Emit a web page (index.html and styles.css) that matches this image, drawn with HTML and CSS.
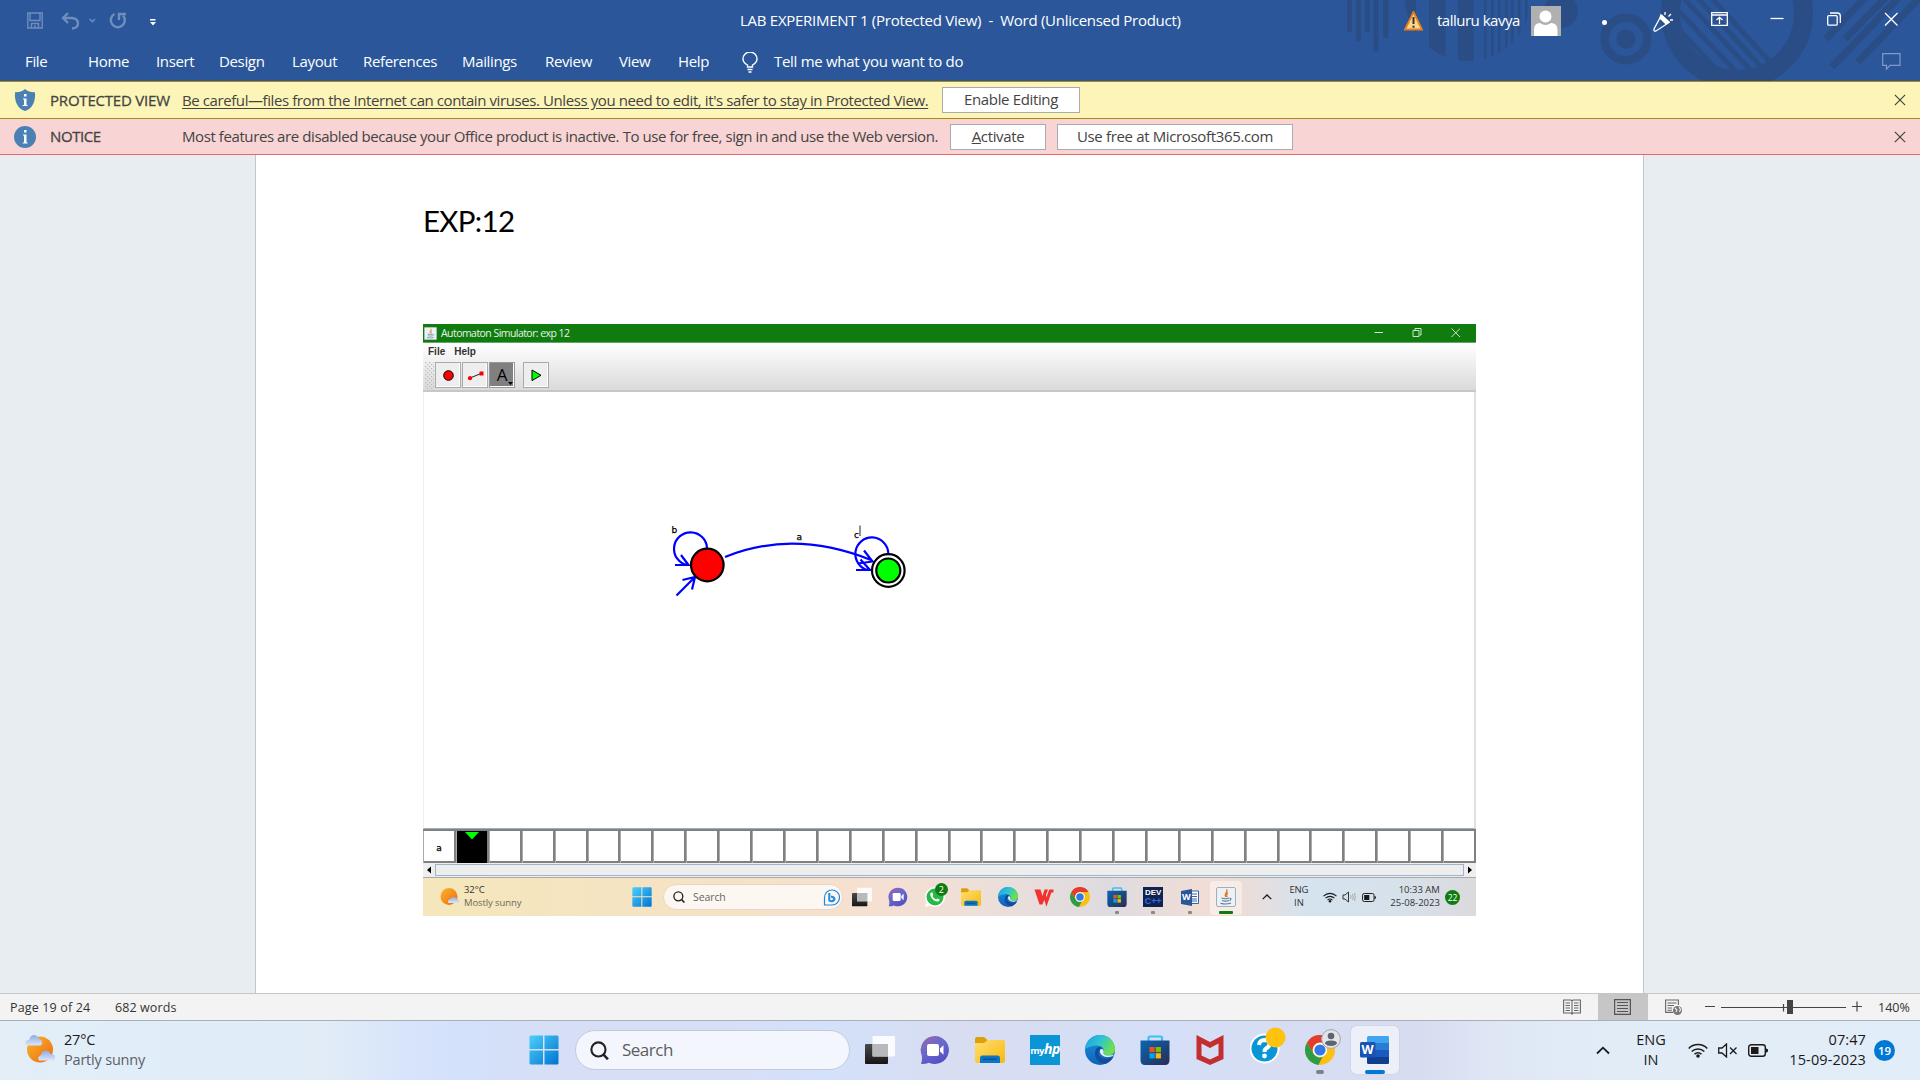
FILE: index.html
```html
<!DOCTYPE html>
<html lang="en">
<head>
<meta charset="utf-8">
<title>LAB EXPERIMENT 1 (Protected View) - Word</title>
<link rel="stylesheet" href="styles.css">
</head>
<body>
<svg class="defs" width="0" height="0" aria-hidden="true">
  <defs>
    <linearGradient id="win" x1="0" y1="0" x2="1" y2="1"><stop offset="0" stop-color="#4cd0fb"/><stop offset="1" stop-color="#0173d0"/></linearGradient>
    <linearGradient id="sun" x1="0" y1="0" x2="1" y2="1"><stop offset="0" stop-color="#f7b92e"/><stop offset="1" stop-color="#f0670f"/></linearGradient>
    <linearGradient id="cloud" x1="0" y1="0" x2="0" y2="1"><stop offset="0" stop-color="#8fabe2"/><stop offset="1" stop-color="#dbe6fa"/></linearGradient>
    <linearGradient id="dark" x1="0" y1="0" x2="0" y2="1"><stop offset="0" stop-color="#4a4a4a"/><stop offset="1" stop-color="#161616"/></linearGradient>
    <linearGradient id="chatg" x1="0" y1="0" x2=".6" y2="1"><stop offset="0" stop-color="#9a68a8"/><stop offset=".5" stop-color="#6a68cc"/><stop offset="1" stop-color="#5450c4"/></linearGradient>
    <linearGradient id="fold" x1="0" y1="0" x2="1" y2="1"><stop offset="0" stop-color="#ffdf72"/><stop offset="1" stop-color="#f8b80c"/></linearGradient>
    <linearGradient id="edgea" x1="0" y1="0" x2="1" y2=".5"><stop offset="0" stop-color="#1b9de2"/><stop offset=".5" stop-color="#2dc2d6"/><stop offset="1" stop-color="#6fe04c"/></linearGradient>
    <linearGradient id="edgeb" x1="0" y1="0" x2="0" y2="1"><stop offset="0" stop-color="#1a94e0"/><stop offset="1" stop-color="#0e62b8"/></linearGradient>
    <linearGradient id="storeg" x1="0" y1="0" x2="1" y2="1"><stop offset="0" stop-color="#0a66b4"/><stop offset="1" stop-color="#2a2c52"/></linearGradient>
    <clipPath id="disc"><circle cx="1468" cy="-2" r="63"/></clipPath>
    <clipPath id="hole"><circle cx="1737" cy="13" r="60"/></clipPath>
    <pattern id="grip" width="4" height="4" patternUnits="userSpaceOnUse"><rect width="1.3" height="1.3" fill="#b9bdc2"/><rect x="2" y="2" width="1.3" height="1.3" fill="#b9bdc2"/></pattern>

    <symbol id="i-start" viewBox="0 0 30 30"><path fill="url(#win)" d="M1.500 .5H14V14H.5V1.500ZM15.500 .5H28.500L29.500 1.500V14H15.500ZM.5 15.500H14V29.500H1.500L.5 28.500ZM15.500 15.500H29.500V28.500L28.500 29.500H15.500Z"/></symbol>
    <symbol id="i-task" viewBox="0 0 30 30"><rect y="9" width="23" height="20" rx="1" fill="url(#dark)"/><rect x="7.500" y="1" width="22.500" height="20.500" rx="1" fill="#fff" fill-opacity=".88"/><path d="M7.500 9H23V21.500H7.500Z" fill="#b8b9ba"/></symbol>
    <symbol id="i-chat" viewBox="0 0 30 30"><path fill="url(#chatg)" d="M15 1A14 14 0 1 1 9 27.700Q4 29.500 1 28.800Q2.500 25.500 1.800 20.500A14 14 0 0 1 15 1Z"/><rect x="7" y="9" width="12" height="12" rx="2" fill="#fff"/><path fill="#fff" d="M20 13.500L23.500 10.300V19.700L20 16.500Z"/></symbol>
    <symbol id="i-folder" viewBox="0 0 30 30"><path fill="#dda00c" d="M0 4Q0 2 2 2H9L12.500 5V10H0Z"/><path fill="url(#fold)" d="M0 8H9L13 5H29Q30 5 30 6.500V26Q30 28 28 28H2Q0 28 0 26Z"/><path fill="#0a75c6" d="M5 28V23Q5 20.500 7.500 20.500H22.500Q25 20.500 25 23V28Z"/><rect x="8" y="23.500" width="14" height="1.500" rx=".7" fill="#0b4f8c"/></symbol>
    <symbol id="i-edge" viewBox="0 0 30 30"><circle cx="15" cy="15" r="15" fill="url(#edgeb)"/><path fill="url(#edgea)" d="M0 14C1 5 8 0 15 0C24 0 30 6 30 14C30 19 26 20.500 23 20.500C20 20.500 18 19.500 18.500 17.500C20 14 17 10.500 12 10.500C6 10.500 2 13 0 14Z"/><path fill="#124d9a" d="M11 14C8 20 12 28 20 29.100C24 27.500 27 25 28.500 21.500C23 25 16 24 14 20C13 17.500 14 14 17.500 13.200C15 11 12 12 11 14Z"/><path fill="#e9eef8" d="M15 15.500C14.500 19 18 22.500 24 22Q28 21.500 29.400 19.500Q27 20.500 23 20.500C20 20.500 18 19.500 18.500 17.500C19.400 14.500 15.800 12.500 15 15.500Z"/></symbol>
    <symbol id="i-store" viewBox="0 0 30 30"><path d="M8.500 7V3Q8.500 1.500 10 1.500H20.500Q22 1.500 22 3V7" fill="none" stroke="#3cc0f5" stroke-width="2.200"/><path fill="url(#storeg)" d="M.5 5.500H29.500V25Q29.500 30 25 30H5Q.5 30 .5 25Z"/><path fill="#f1511b" d="M9.500 12H14.700V17.200H9.500Z"/><path fill="#80bb05" d="M15.700 12H20.900V17.200H15.700Z"/><path fill="#04a4ef" d="M9.500 18.200H14.700V23.400H9.500Z"/><path fill="#fdb90a" d="M15.700 18.200H20.900V23.400H15.700Z"/></symbol>
    <symbol id="i-chrome" viewBox="0 0 30 30"><circle cx="15" cy="15" r="15" fill="#fbc012"/><path fill="#e33b2f" d="M2 7.500A15 15 0 0 1 28 7.500H15A7.500 7.500 0 0 0 8.500 18.700Z"/><path fill="#2c9c46" d="M2 7.500L8.500 18.700A7.500 7.500 0 0 0 17.500 22.100L13.400 29.900A15 15 0 0 1 2 7.500Z"/><circle cx="15" cy="15" r="7.200" fill="#fff"/><circle cx="15" cy="15" r="5.600" fill="#3279e8"/></symbol>
    <symbol id="i-mag" viewBox="0 0 18 18"><circle cx="8" cy="8" r="6.700" fill="none" stroke="#222" stroke-width="2"/><path d="M12.800 12.800L17 17.300" stroke="#222" stroke-width="2.400"/></symbol>
    <symbol id="i-chev" viewBox="0 0 14 8"><path d="M1 7L7 1.200L13 7" fill="none" stroke="#1a1a1a" stroke-width="1.800"/></symbol>
    <symbol id="i-wifi" viewBox="0 0 20 15"><g fill="none" stroke="#1a1a1a" stroke-width="1.500"><path d="M.7 5.500A13 13 0 0 1 19.300 5.500"/><path d="M3.700 8.500A9 9 0 0 1 16.300 8.500"/><path d="M6.500 11.300A5 5 0 0 1 13.500 11.300"/></g><circle cx="10" cy="13" r="1.800" fill="#1a1a1a"/></symbol>
    <symbol id="i-batt" viewBox="0 0 20 13"><rect x=".7" y=".7" width="16.600" height="11.600" rx="2.500" fill="none" stroke="#1a1a1a" stroke-width="1.400"/><path d="M3 3H10.500V10H3ZM18 4.500H18.500L20 5.500V7.500L18.500 8.500H18Z" fill="#1a1a1a"/></symbol>
    <symbol id="i-x" viewBox="0 0 14 14"><path d="M1 1L13 13M13 1L1 13" fill="none" stroke="currentColor" stroke-width="1.400"/></symbol>
    <symbol id="i-java" viewBox="0 0 20 20"><rect x=".5" y=".5" width="19" height="19" rx="1.500" fill="#edf1f4" stroke="#9fb0bc"/><path d="M10.500 2.500C13 5 7 6.500 10 10M12 5.500C9.500 7 11.500 8.500 10.800 10" fill="none" stroke="#e07a28" stroke-width="1.300"/><path d="M5.500 11Q10 12.500 13 11M6 13.500Q10 14.800 13 13.500M4.500 16.200Q10 18 15 16M13.500 11Q16.500 11.500 13.500 13.500" fill="none" stroke="#557f9f" stroke-width="1.100"/></symbol>
  </defs>
</svg>

<header class="ribbon">
  <svg class="ribbon-art" width="1920" height="81" viewBox="0 0 1920 81" fill="#2a4d85">
    <path d="M1347 0H1352V32H1347ZM1356 0H1361V41H1356ZM1365 0H1370V32H1365ZM1373.500 0H1378.500V52H1373.500ZM1383 0H1388.500V38H1383Z"/>
    <g clip-path="url(#disc)"><path d="M1400 0H1416V70H1400ZM1429 0H1445.500V70H1429ZM1458 0H1473.500V70H1458ZM1484 0H1486.500V70H1484ZM1491 0H1493.500V70H1491ZM1498 0H1500.500V70H1498ZM1505 0H1507.500V70H1505ZM1511 0H1513.500V70H1511ZM1518 0H1520.500V70H1518ZM1525 0H1527.500V70H1525Z"/></g>
    <circle cx="1561" cy="11" r="17"/>
    <circle cx="1626" cy="39" r="21.300" fill="none" stroke="#2a4d85" stroke-width="8.500"/><circle cx="1626" cy="39" r="9.500"/>
    <circle cx="1737" cy="13" r="66.500" fill="none" stroke="#2a4d85" stroke-width="19"/>
    <g clip-path="url(#hole)" stroke="#2a4d85" stroke-width="5"><path d="M1670 20L1730 84M1672 4L1742 78M1680 -6L1754 74M1692 -8L1764 70M1706 -8L1772 64"/></g>
    <g stroke="#2a4d85" stroke-width="7"><path d="M1826 39L1872 -10M1845 39L1893 -10M1832 67L1904 -8M1858 62L1925 -8"/></g>
  </svg>
  <div class="titlebar">
    <svg class="qat" width="134" height="24" viewBox="0 0 134 24">
      <g fill="none" stroke="#6f8dbd" stroke-width="1.400"><path d="M.8 1H15.200V16H.8ZM3 1V8.500H13V1M4.500 16V11.500H11.500V16M8 13V16"/><path d="M62.500 7L65.300 9.800L68 7"/></g>
      <g fill="none" stroke="#6f8dbd" stroke-width="2.400"><path d="M41 1L36 6L41 11M36 6H45Q51 6.500 51 11.500Q51 16 45 16.500"/><path d="M87.500 2A7 7 0 1 0 96 3.500M92 8V2H99"/></g>
      <path d="M123 7H128.500V8.500H123ZM123 10H129L126 13.500Z" fill="#fff"/>
    </svg>
    <div class="title">LAB EXPERIMENT 1 (Protected View)&nbsp; -&nbsp; Word (Unlicensed Product)</div>
    <svg class="warn" width="19" height="20" viewBox="0 0 19 20"><path d="M9.500 1L18 18.500H1Z" fill="#fbd588" stroke="#e5801e" stroke-width="1.800"/><path d="M9.500 6V13M9.500 14.800V16.800" stroke="#333" stroke-width="2"/></svg>
    <div class="user">talluru kavya</div>
    <svg class="avatar" width="30" height="30" viewBox="0 0 30 30"><rect width="30" height="30" fill="#b0b0b0"/><circle cx="14.500" cy="10.500" r="6" fill="#fff"/><path d="M3 30V24Q3 17 9 17Q14.500 21 20 17Q26.500 17 26.500 24V30Z" fill="#fff"/></svg>
    <i class="dot"></i>
    <svg class="wctl" width="250" height="24" viewBox="1650 8 250 24" fill="none" stroke="#fff" stroke-width="1.300">
      <path d="M1661.500 15L1654 29Q1653.500 31.500 1656 31L1669 22.500L1661.500 15"/><path d="M1661 15L1669 22L1666 24L1660 18Z" fill="#fff"/><path d="M1665 12V15M1671 14L1668.500 16.500M1673 20H1670"/>
      <path d="M1711.700 12.700H1727.300V25.300H1711.700ZM1711.700 15H1727.300M1719.500 24V17.500M1716.500 20L1719.500 17.300L1722.500 20"/>
      <path d="M1770.500 18.500H1783.500"/><rect x="1827.700" y="15.700" width="9.500" height="9.500" rx="1"/><path d="M1830 13H1837.500Q1840.300 13 1840.300 16V23"/>
      <path d="M1885 13L1897.500 25.500M1897.500 13L1885 25.500"/>
    </svg>
  </div>
  <nav class="menu">
    <span>File</span><span>Home</span><span>Insert</span><span>Design</span><span>Layout</span><span>References</span><span>Mailings</span><span>Review</span><span>View</span><span>Help</span>
    <svg width="17" height="21" viewBox="0 0 17 21" fill="none" stroke="#fff" stroke-width="1.400"><path d="M5.500 15V13Q1 10.500 1 7A7 7 0 0 1 15 7Q15 10.500 10.500 13V15ZM5.500 17.500H10.500M6.500 20H9.500"/></svg>
    <span class="tell">Tell me what you want to do</span>
    <svg class="comment" width="19" height="18" viewBox="0 0 19 18" fill="none" stroke="#7f9ac8" stroke-width="1.200"><path d="M.7 .7H18V12.300H8L4.500 16V12.300H.7Z"/></svg>
  </nav>
</header>

<div class="bar bar-yellow">
  <svg class="bar-ico" width="22" height="22" viewBox="0 0 22 22"><path d="M11 0Q15 3.500 21 3.200Q22 18 11 22Q0 18 1 3.200Q7 3.500 11 0Z" fill="#4a80b4"/><path d="M10 5H12.500V7.500H10ZM9 9.500H12.500V16H13.500V17H8.700V16H10V10.500H9Z" fill="#fff"/></svg>
  <b class="bar-label l1">PROTECTED VIEW</b>
  <u class="bar-text t1">Be careful—files from the Internet can contain viruses. Unless you need to edit, it's safer to stay in Protected View.</u>
  <span class="btn b1">Enable Editing</span>
  <svg class="bar-x" width="12" height="12"><use href="#i-x"/></svg>
</div>
<div class="bar bar-pink">
  <svg class="bar-ico" width="22" height="22" viewBox="0 0 22 22"><circle cx="11" cy="11" r="11" fill="#4a80b4"/><path d="M10 4H12.500V6.500H10ZM9 8.500H12.500V16.500H13.500V17.500H8.700V16.500H10V9.500H9Z" fill="#fff"/></svg>
  <b class="bar-label l2">NOTICE</b>
  <span class="bar-text t2">Most features are disabled because your Office product is inactive. To use for free, sign in and use the Web version.</span>
  <span class="btn b2"><u>A</u>ctivate</span>
  <span class="btn b3">Use free at Microsoft365.com</span>
  <svg class="bar-x" width="12" height="12"><use href="#i-x"/></svg>
</div>

<main class="desk">
  <article class="page">
    <h1>EXP:12</h1>
    <section class="shot">
      <div class="s-title">
        <svg width="13" height="13"><use href="#i-java"/></svg>
        <span>Automaton Simulator: exp 12</span>
        <svg class="s-ctl" width="86" height="12" viewBox="0 0 86 12" fill="none" stroke="#cde6cd" stroke-width="1"><path d="M.5 5.500H9M39 3.500H45V9.500H39ZM41 3V1.500H47V8H45.500M77.500 1.500L86 10M86 1.500L77.500 10"/></svg>
      </div>
      <div class="s-tools">
        <div class="s-menu"><span>File</span><span>Help</span></div>
        <div class="s-btns">
          <svg class="grip" width="9" height="27"><rect width="9" height="27" fill="url(#grip)"/></svg>
          <span class="tb"><svg width="24" height="24"><circle cx="12.500" cy="12.500" r="4.800" fill="#f00" stroke="#000"/></svg></span>
          <span class="tb"><svg width="24" height="24"><path d="M7 15L18 10.500" stroke="#222"/><circle cx="7" cy="15.200" r="2.100" fill="#f00"/><rect x="16.500" y="8.500" width="4" height="4" fill="#f00"/></svg></span>
          <span class="tb on">A<svg width="5" height="3"><path d="M0 0H5L2.500 3Z"/></svg></span>
          <span class="tb run"><svg width="24" height="24"><path d="M8 7L17 12.300L8 17.600Z" fill="#0f0" stroke="#000"/></svg></span>
        </div>
      </div>
      <div class="canvas">
        <svg width="1050" height="436" viewBox="424 392 1050 436" fill="none" stroke="#00f" stroke-width="2.200">
          <path d="M707 548A16.500 16.500 0 1 0 687.500 565M675 565H688.500L681 555"/>
          <path d="M676.500 595.500L694.500 577.500M682.500 580L695 577L692 589.500"/>
          <path d="M725 557Q793 529 871 560M864 550.500L872.500 561.500L858 563.500"/>
          <path d="M888.300 553A16.500 16.500 0 1 0 868 570M856 570H870L860.500 559.500"/>
          <circle cx="707.300" cy="565" r="16.300" fill="#f00" stroke="#000"/>
          <circle cx="888.300" cy="570.500" r="16.300" fill="#fff" stroke="#000"/><circle cx="888.300" cy="570.500" r="12" fill="#0f0" stroke="#000"/>
          <path d="M860 525.500V536" stroke="#222" stroke-width="1"/>
          <g class="lbl"><text x="671.500" y="533">b</text><text x="796.500" y="539.500">a</text><text x="854" y="538">c</text></g>
        </svg>
      </div>
      <div class="tape">
        <i>a</i><i class="head"><svg width="14" height="8"><path d="M0 0H14L7 7.500Z" fill="#0f0"/></svg></i><i></i><i></i><i></i><i></i><i></i><i></i><i></i><i></i><i></i><i></i><i></i><i></i><i></i><i></i><i></i><i></i><i></i><i></i><i></i><i></i><i></i><i></i><i></i><i></i><i></i><i></i><i></i><i></i><i></i><i></i>
      </div>
      <div class="scroll"><svg width="12" height="12"><path d="M8 2.500V9.500L4 6Z"/></svg><span></span><svg width="12" height="12"><path d="M4 2.500V9.500L8 6Z"/></svg></div>
      <div class="s-bar">
        <svg class="s-wx" width="20" height="20" viewBox="0 0 20 20"><circle cx="9" cy="9.500" r="8.500" fill="url(#sun)"/><path d="M8 15.500Q7.500 12 11 12Q12 8.500 15 10.500Q16.500 12 19 13Q20 16 17 16H10Q8.500 16 8 15.500Z" fill="url(#cloud)"/></svg>
        <div class="s-wt">32°C<br><em>Mostly sunny</em></div>
        <svg class="s-start" width="20" height="20"><use href="#i-start"/></svg>
        <div class="s-search"><svg width="12" height="12"><use href="#i-mag"/></svg><span>Search</span>
          <svg width="17" height="17" viewBox="0 0 17 17" fill="none" stroke="#2188e4" stroke-width="1.200"><path d="M1.500 16V8.500A7.500 7.500 0 1 1 9 16Z"/><path d="M6.300 4V11.500Q9 13.500 11.500 10.500Q11.500 8 8 7.500" stroke-width="2"/></svg></div>
        <div class="s-dock">
          <svg width="20" height="20"><use href="#i-task"/></svg>
          <svg width="20" height="20"><use href="#i-chat"/></svg>
          <span class="wa"><svg width="20" height="20" viewBox="0 0 20 20"><circle cx="10" cy="10" r="10" fill="#fff"/><circle cx="10" cy="10" r="8.500" fill="#27b845"/><path d="M0 20L2 14L6 18Z" fill="#fff"/><path d="M6 5.500Q4.500 7 6 10Q9 15 13.500 14.500Q15 13.500 14.500 12.500L12.500 11.500L11 12.500Q8.500 11.500 7.500 9L8.300 8L7.500 5.500Z" fill="#fff"/></svg><b>2</b></span>
          <svg width="20" height="20"><use href="#i-folder"/></svg>
          <svg width="20" height="20"><use href="#i-edge"/></svg>
          <svg width="20" height="20" viewBox="0 0 20 20"><path fill="#f2322c" d="M.5 2.500H6.500L8.500 9L10.500 2.500H14L8.500 17.500H5.500Z"/><path fill="none" stroke="#f2322c" stroke-width="3" d="M10.500 8.500L12.500 15L16.300 4H19.500"/></svg>
          <svg width="20" height="20"><use href="#i-chrome"/></svg>
          <span class="run-dot"><svg width="20" height="20"><use href="#i-store"/></svg></span>
          <span class="run-dot"><span class="dev">DEV<br><b>C++</b></span></span>
          <span class="run-dot"><svg width="20" height="20" viewBox="0 0 20 20"><path d="M9 4H18.500V16.500H9Z" fill="#fff" stroke="#3565a8"/><path d="M12 7H17M12 9.500H17M12 12H17M12 14H17" stroke="#3565a8"/><path d="M1 4L12 2V19L1 17Z" fill="#2a5699"/><text class="w-sm" x="2" y="13">W</text></svg></span>
          <span class="run-dot act"><svg width="20" height="20"><use href="#i-java"/></svg></span>
        </div>
        <svg class="s-chev" width="10" height="6"><use href="#i-chev"/></svg>
        <div class="s-lang">ENG<br>IN</div>
        <svg class="s-wifi" width="14" height="11"><use href="#i-wifi"/></svg>
        <svg class="s-spk" width="14" height="12" viewBox="0 0 14 12" fill="none" stroke="#333"><path d="M1 4H3L6.500 1V11L3 8H1Z"/><path d="M8.500 4Q9.500 6 8.500 8M10.500 3Q12 6 10.500 9M12.500 2Q14 6 12.500 10" stroke="#aaa"/></svg>
        <svg class="s-batt" width="14" height="9"><use href="#i-batt"/></svg>
        <div class="s-time">10:33 AM<br>25-08-2023</div>
        <b class="s-badge">22</b>
      </div>
    </section>
  </article>
</main>

<footer class="status">
  <span class="st1">Page 19 of 24</span><span class="st2">682 words</span>
  <svg class="st-read" width="18" height="16" viewBox="0 0 18 16" fill="none" stroke="#666" stroke-width="1.100"><path d="M.6 1H8L9 2L10 1H17.400V14H10L9 15L8 14H.6ZM9 2V16M2.500 4H7M2.500 6.500H7M2.500 9H7M2.500 11.500H7M11 4H15.500M11 6.500H15.500M11 9H15.500M11 11.500H15.500"/></svg>
  <span class="st-sel"><svg width="18" height="16" viewBox="0 0 18 16" fill="none" stroke="#555" stroke-width="1.200"><path d="M.6 .6H16.400V15.400H.6ZM3 3.500H14M3 6.500H14M3 9.500H14M3 12.500H14"/></svg></span>
  <svg class="st-web" width="18" height="16" viewBox="0 0 18 16" fill="none" stroke="#666" stroke-width="1.100"><path d="M8 13.400H.6V1H13.400V6M2.500 4H11.500M2.500 6.500H9M2.500 9H7M2.500 11.200H7"/><circle cx="12.500" cy="11.500" r="4.500" fill="#777" stroke="none"/><path d="M10 9L12 11L11 13M14 8L15.500 10.500L14.500 13" stroke="#f3f3f3"/></svg>
  <svg class="st-zoom" width="158" height="16" viewBox="0 0 158 16"><path d="M0 7.500H10M16 8.500H141M78.500 5V12.500M147 7.500H157M152 2.500V12.500" stroke="#444" stroke-width="1.200"/><rect x="82" y="1" width="6" height="14" fill="#444"/></svg>
  <span class="st3">140%</span>
</footer>

<footer class="taskbar">
  <svg class="wx" width="31" height="30" viewBox="0 0 31 30"><circle cx="15" cy="15.500" r="13" fill="url(#sun)"/><path d="M1 11Q-1 6.500 4 6Q5 1 9.500 1Q13.500 2 14 5Q18 6 17 10Q16 11.500 15 11.500H3Q1.500 11.500 1 11Z" fill="url(#cloud)"/><path d="M14 26.500Q11.500 22.500 16 21Q17 16.500 21 16.500Q25 17 25.500 20Q30.500 20 30 25Q29 26.500 28 26.500Z" fill="url(#cloud)"/></svg>
  <div class="wt">27°C<br><em>Partly sunny</em></div>
  <svg class="start" width="30" height="30"><use href="#i-start"/></svg>
  <div class="search"><svg width="19" height="19"><use href="#i-mag"/></svg><span>Search</span></div>
  <div class="dock">
    <svg width="30" height="30"><use href="#i-task"/></svg>
    <svg width="30" height="30"><use href="#i-chat"/></svg>
    <svg width="30" height="30"><use href="#i-folder"/></svg>
    <span class="hp">my<em>hp</em></span>
    <svg width="30" height="30"><use href="#i-edge"/></svg>
    <svg width="30" height="30"><use href="#i-store"/></svg>
    <svg width="30" height="30" viewBox="0 0 30 30"><path fill="#c42e2e" fill-rule="evenodd" d="M1.500 0L15 7L28.500 0V24L15 30L1.500 24ZM6.500 8.500V20.500L15 24.500L23.500 20.500V8.500L15 13Z"/></svg>
    <svg class="wide" width="36" height="38" viewBox="0 0 36 38"><circle cx="14.500" cy="22.500" r="15" fill="#fff"/><circle cx="14.500" cy="22.500" r="13" fill="#0a96d6"/><path d="M9 19Q9.500 14 14.500 14Q20 14.500 19.500 18.500Q19 21 16 22.500Q14.500 23.500 14.500 26" fill="none" stroke="#fff" stroke-width="4"/><circle cx="14.500" cy="30" r="2.400" fill="#fff"/><circle cx="25.500" cy="11.500" r="10" fill="#ffc20e"/></svg>
    <span class="chr"><svg width="30" height="30"><use href="#i-chrome"/></svg><svg class="prof" width="20" height="20" viewBox="0 0 20 20"><circle cx="10" cy="10" r="9.400" fill="#e2e4e8" stroke="#a0a3a8"/><circle cx="10" cy="7" r="3.300" fill="#5c6470"/><path d="M4 14.500Q4 11.500 10 11.500Q16 11.500 16 14.500Q14 17 10 17Q6 17 4 14.500Z" fill="#5c6470"/></svg></span>
    <span class="word"><svg width="30" height="30" viewBox="0 0 30 30"><path fill="#41a5ee" d="M7 2.500Q7 1 8.500 1H28Q29 1 29 2.500V8H7Z"/><path fill="#2b7cd3" d="M7 8H29V15H7Z"/><path fill="#185abd" d="M7 15H29V22H7Z"/><path fill="#103f91" d="M7 22H29V27.500Q29 29 28 29H8.500Q7 29 7 27.500Z"/><rect y="7" width="15.500" height="15.500" rx="1.500" fill="#1c52b4"/><text class="w-lg" x="1.500" y="18.800">W</text></svg></span>
  </div>
  <svg class="chev" width="14" height="9"><use href="#i-chev"/></svg>
  <div class="lang">ENG<br>IN</div>
  <svg class="wifi" width="20" height="15"><use href="#i-wifi"/></svg>
  <svg class="spk" width="20" height="15" viewBox="0 0 20 15" fill="none" stroke="#1a1a1a" stroke-width="1.300"><path d="M.7 5H4L8.500 1V14L4 10H.7ZM12 4.500L18.500 11M18.500 4.500L12 11"/></svg>
  <svg class="batt" width="20" height="13"><use href="#i-batt"/></svg>
  <div class="time">07:47<br>15-09-2023</div>
  <b class="badge">19</b>
</footer>
</body>
</html>
```
FILE: styles.css
```css
* { box-sizing: border-box; }
body {
  margin: 0; width: 1920px; height: 1080px; overflow: hidden;
  display: flex; flex-direction: column;
  font: 15px/20px "Open Sans", "Noto Sans", sans-serif; color: #222;
}
svg { display: block; flex: none; }
span, b, div { white-space: nowrap; }
em, i { font-style: normal; }
.defs { position: absolute; }

/* ribbon */
.ribbon { position: relative; height: 81px; flex: none; background: #2b579a; color: #fff; }
.ribbon-art { position: absolute; left: 0; top: 0; }
.titlebar { position: relative; height: 43px; display: flex; align-items: flex-start; padding-left: 27px; }
.qat { margin-top: 12px; }
.title { margin: 11px 0 0 579px; width: 441px; letter-spacing: -.27px; }
.warn { margin: 11px 0 0 223px; }
.user { margin: 11px 0 0 14px; width: 94px; letter-spacing: -.5px; }
.title, .user { line-height: 19px; }
.avatar { margin-top: 6px; }
.dot { width: 5px; height: 5px; margin: 20px 0 0 41px; border-radius: 50%; background: #fff; flex: none; }
.wctl { margin: 8px 0 0 43px; }
.menu {
  position: relative; height: 38px; padding-left: 24px; display: grid; align-items: center;
  grid-template-columns: 64px 68px 63px 73px 71px 99px 83px 74px 59px 64px 32px 1108px 19px;
  letter-spacing: -.35px;
}
.menu span { padding-bottom: 2px; }
.menu span:first-child { padding-left: 1px; }
.menu .tell { letter-spacing: -.3px; }

/* message bars */
.bar { flex: none; display: flex; align-items: center; padding: 0 14px; color: #444; }
.bar-yellow { height: 38px; background: #fdf5b7; border-top: 1px solid #ab8a16; border-bottom: 1px solid #ab8a16; }
.bar-pink { height: 36px; background: #f8d4d4; border-bottom: 1px solid #e5686b; }
.bar-label { width: 132px; margin-left: 14px; font-weight: 500; font-size: 15px; -webkit-text-stroke: .3px #444; }
.l1 { letter-spacing: -.2px; }
.l2 { letter-spacing: -.4px; }
.bar-text { white-space: nowrap; flex: none; letter-spacing: -.41px; }
.t1 { width: 760px; text-underline-offset: 2px; }
.t2 { width: 768px; }
.bar-pink .bar-label, .bar-pink .bar-text { line-height: 18px; padding-bottom: 2px; }
.btn { height: 26px; line-height: 23px; border: 1px solid #ababab; background: #fff; text-align: center; letter-spacing: -.35px; flex: none; }
.b1 { width: 138px; }
.b2 { width: 96px; margin-right: 11px; }
.b3 { width: 236px; }
.bar-pink .btn { line-height: 22px; }
.bar-x { margin-left: auto; }

/* document */
.desk { height: 838px; flex: none; padding-left: 255px; background: #e8edf1; }
.page { width: 1389px; height: 838px; padding: 43px 0 0 167px; background: #fff; border: solid #c3c7cc; border-width: 0 1px; }
h1 { margin: 0 0 81px 0; height: 45px; font: 400 29.500px/45px Lato, sans-serif; color: #000; letter-spacing: -.7px; }
.shot { width: 1053px; height: 592px; display: flex; flex-direction: column; }
.s-title { height: 19px; background: #107c10; border-bottom: 1px solid #62a862; display: flex; align-items: center; padding: 0 16px 0 1px; color: #e6f2e6; font-size: 10.500px; }
.s-title span { margin-left: 4px; letter-spacing: -.55px; }
.s-ctl { margin-left: auto; }
.s-tools { height: 49px; background: linear-gradient(#fff, #dadada); border-bottom: 2px solid #c3c8cc; }
.s-menu { height: 19px; padding-left: 5px; display: flex; gap: 9px; font: bold 10px/17px "Liberation Sans", sans-serif; color: #333; }
.s-btns { display: flex; gap: 1px; padding-left: 2px; }
.grip { margin-right: 0; }
.tb { width: 26px; height: 26px; border: 1px solid #aaa; background: #eee; box-shadow: inset -1px -1px #fff; }
.on { position: relative; background: #808080; border-color: #999; text-align: center; font: 17px/24px "Open Sans", sans-serif; color: #000; }
.on svg { position: absolute; right: 1px; bottom: 2px; }
.run { margin-left: 7px; }
.canvas { height: 437px; flex: none; background: #fff; border: solid #eee; border-width: 0 0 0 1px; border-right: 2px solid #dde1e5; border-bottom: 1px solid #9fb0bc; }
.lbl { font: 9px "DejaVu Sans", sans-serif; fill: #000; stroke: #000; stroke-width: .25px; }
.tape { height: 34px; flex: none; display: grid; grid-template-columns: repeat(32, 1fr); border-top: 2px solid #808080; border-bottom: 2px solid #808080; background: #fff; }
.tape i { border: 1px solid #aaa; border-top: 0; border-bottom: 0; border-right: 2px solid #808080; font: 9px/34px "DejaVu Sans", sans-serif; text-align: center; color: #000; -webkit-text-stroke: .25px; }
.tape .head { background: #000; padding: 1px 0 0 8px; }
.scroll { height: 15px; flex: none; display: flex; align-items: center; background: #eee; border-bottom: 1px solid #a5acb0; }
.scroll span { flex: 1; height: 12px; border: 1px solid #9db4cb; background: #eee; }
.s-bar {
  height: 38px; display: flex; align-items: center; padding-left: 17px; color: #333;
  font-size: 9.500px; line-height: 13px; letter-spacing: -.1px;
  background: linear-gradient(90deg, #f5e7bb 0, #f5e2c6 30%, #f6e0d2 43%, #ecdfda 54%, #dedbe0 65%, #f0ddd5 74%, #efdcd5 77%, #d5e3ef 84%, #d7e1ea 93%, #dcdadd 100%);
}
.s-bar em { color: #6d675c; }
.s-wt, .s-lang, .s-time { padding-bottom: 2px; }
.s-wt { width: 168px; margin-left: 4px; }
.s-search { width: 180px; height: 26px; margin-left: 11px; padding: 0 2px 0 9px; display: flex; align-items: center; border-radius: 13px; background: #fcf7f0; border: 1px solid #e6d8c8; font-size: 10.500px; color: #666; }
.s-search span { flex: 1; margin-left: 8px; }
.s-dock { display: flex; align-items: center; gap: 16.400px; margin-left: 9px; }
.wa, .run-dot { position: relative; width: 20px; flex: none; }
.wa b { position: absolute; left: 10px; top: -4px; width: 13px; height: 13px; border-radius: 50%; background: #107c10; color: #fff; font: 9px/13px "Open Sans", sans-serif; text-align: center; }
.run-dot::after { content: ""; position: absolute; left: 8px; top: 24px; width: 4px; height: 2.500px; border-radius: 1px; background: #888; }
.act::before { content: ""; position: absolute; left: -6px; top: -6px; width: 32px; height: 34px; border-radius: 3px; background: rgba(255,255,255,.45); }
.act svg { position: relative; }
.run-dot.act::after { left: 3px; width: 14px; background: #107c10; }
.dev { display: block; width: 20px; height: 20px; background: #112250; color: #fff; font: bold 8px/9px "Liberation Sans", sans-serif; text-align: center; padding-top: 1px; }
.dev b { color: #2f6fe0; font-size: 9px; }
.w-sm { font: bold 9px "Open Sans", sans-serif; fill: #fff; }
.w-lg { font: bold 12.500px "Open Sans", sans-serif; fill: #fff; }
.s-chev { margin-left: 26px; }
.s-lang { width: 24px; margin-left: 15px; text-align: center; }
.s-wifi { margin-left: 12px; }
.s-spk { margin-left: 5px; }
.s-batt { margin-left: 6px; }
.s-time { width: 64px; text-align: right; letter-spacing: 0; }
.s-badge { width: 15px; height: 15px; margin-left: 5px; border-radius: 50%; background: #107c10; color: #fff; font: 8.500px/15px "Open Sans", sans-serif; text-align: center; }

/* status bar */
.status { height: 28px; flex: none; display: flex; align-items: center; padding-left: 10px; background: #f3f3f3; border-top: 1px solid #c6c6c6; border-bottom: 1px solid #a9afb8; font-size: 12.500px; color: #333; }
.status span:not(.st-sel) { padding-top: 2px; }
.st1 { width: 105px; letter-spacing: .15px; }
.st2 { width: 1448px; letter-spacing: .1px; }
.st-sel { width: 50px; height: 26px; margin-left: 17px; padding: 5px 0 0 16px; background: #c6c6c6; }
.st-web { margin-left: 17px; }
.st-zoom { margin-left: 22px; }
.st3 { margin-left: 15px; }

/* taskbar */
.taskbar {
  height: 59px; flex: none; display: flex; align-items: center; padding-left: 25px; color: #1a1a1a; font-size: 14.500px;
  background: linear-gradient(90deg, #e3eef7 0, #e0edf9 10%, #e1ecf7 17%, #d8e4fb 21%, #d3e1fa 24%, #d6dff6 29%, #d7dff6 38%, #d3e1fa 43%, #d8ddf1 50%, #d5dff7 60%, #d8dcf0 74%, #dfe7f5 78%, #e2ecf7 84%, #e1edf8 100%);
}
.taskbar em { color: #5b6068; }
.taskbar .wt, .lang, .time { padding-bottom: 2px; }
.wx { margin-top: -4px; }
.wt { width: 465px; margin-left: 8px; letter-spacing: -.2px; }
.start { margin-top: -1px; }
.search { width: 275px; height: 40px; margin: -1px 0 0 16px; padding-left: 14px; display: flex; align-items: center; border-radius: 20px; background: #f3f6fd; border: 1px solid #c4cbdd; font-size: 17px; color: #5d5d5d; }
.search span { margin-left: 13px; letter-spacing: -.5px; }
.dock { display: flex; align-items: center; gap: 25px; margin-left: 15px; height: 59px; width: 535px; padding-bottom: 1px; }
.hp { width: 30px; height: 30px; flex: none; background: #0a96d6; color: #fff; font: bold 9.500px/28px "Open Sans", sans-serif; text-align: center; letter-spacing: -.5px; }
.taskbar .hp em { color: #fff; font-style: italic; font-size: 14px; }
.wide { margin: -10px -6px 0 0; }
.chr, .word { position: relative; width: 30px; flex: none; }
.prof { position: absolute; left: 16px; top: -6px; }
.chr::after { content: ""; position: absolute; left: 11px; top: 35px; width: 8px; height: 4px; border-radius: 2px; background: #7d8189; }
.word::before { content: ""; position: absolute; left: -9px; top: -9px; width: 48px; height: 48px; border-radius: 5px; background: rgba(255,255,255,.55); box-shadow: 0 0 1px #999; }
.word svg { position: relative; }
.word::after { content: ""; position: absolute; left: 5px; top: 35px; width: 20px; height: 4px; border-radius: 2px; background: #0078d4; }
.chev { margin-left: 196px; }
.lang { width: 40px; margin-left: 21px; text-align: center; }
.wifi { margin-left: 17px; }
.spk { margin-left: 10px; }
.batt { margin-left: 10px; }
.time { width: 98px; text-align: right; letter-spacing: .1px; }
.badge { width: 21px; height: 21px; margin-left: 8px; border-radius: 50%; background: #0078d4; color: #fff; font: 600 11.500px/21px "Open Sans", sans-serif; text-align: center; }
```
